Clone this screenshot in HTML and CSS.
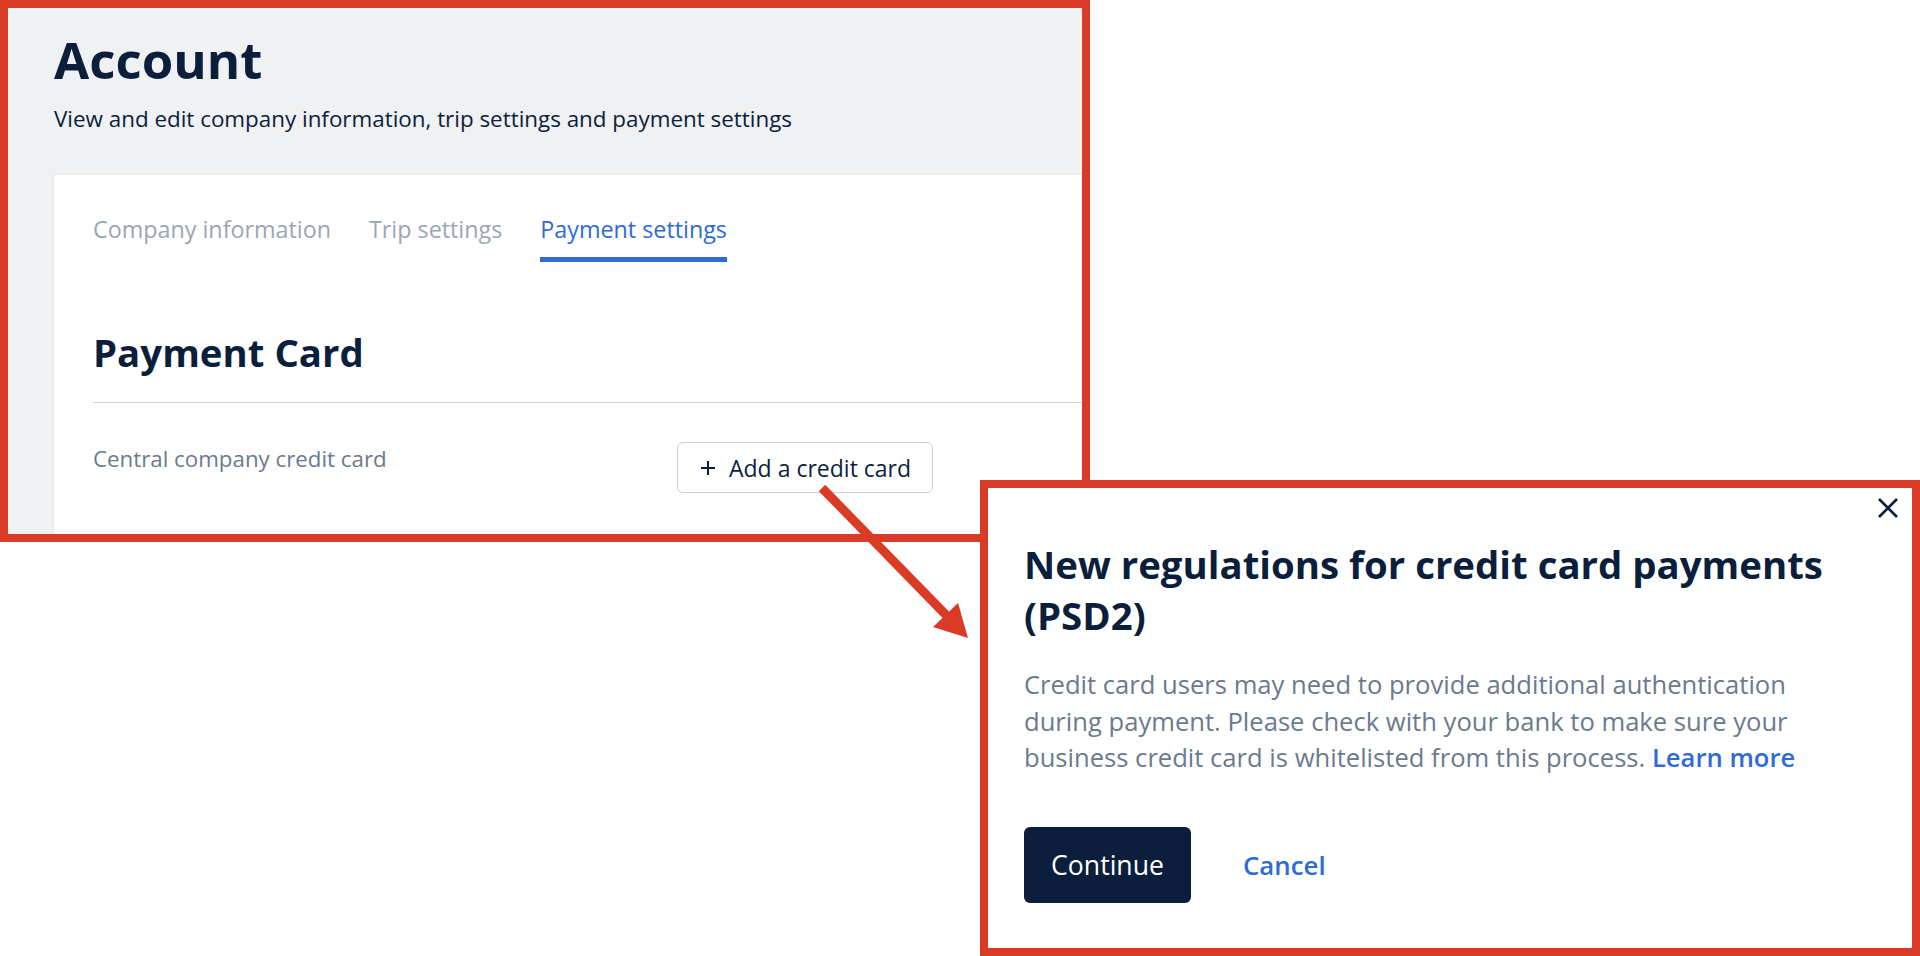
FILE: index.html
```html
<!DOCTYPE html>
<html lang="en">
<head>
<meta charset="utf-8">
<title>Account - Payment settings</title>
<link rel="stylesheet" href="styles.css">
</head>
<body>
<div class="canvas">
  <section class="shot shot-page">
    <div class="page">
      <h1 class="page-title">Account</h1>
      <p class="page-subtitle">View and edit company information, trip settings and payment settings</p>
      <div class="card">
        <nav class="tabs">
          <span class="tab">Company information</span>
          <span class="tab">Trip settings</span>
          <span class="tab tab-active">Payment settings</span>
        </nav>
        <h2 class="section-title">Payment Card</h2>
        <div class="divider"></div>
        <div class="row">
          <span class="row-label">Central company credit card</span>
          <button class="btn-outline" type="button">
            <svg class="plus" viewBox="0 0 16 16" width="16" height="16"><path d="M8 1v14M1 8h14" stroke="#0b1f3d" stroke-width="2" fill="none"/></svg>
            <span>Add a credit card</span>
          </button>
        </div>
      </div>
    </div>
  </section>

  <svg class="arrow" width="1920" height="956" viewBox="0 0 1920 956">
    <line x1="822" y1="488" x2="948" y2="617" stroke="#d93b27" stroke-width="9"/>
    <polygon points="968,638 933,627 958,603" fill="#d93b27"/>
  </svg>

  <section class="shot shot-modal">
    <div class="modal">
      <button class="close" type="button" aria-label="Close">
        <svg viewBox="0 0 22 22" width="22" height="22"><path d="M2 2l18 18M20 2L2 20" stroke="#0b1f3d" stroke-width="2.6" fill="none"/></svg>
      </button>
      <h2 class="modal-title">New regulations for credit card payments (PSD2)</h2>
      <p class="modal-text">Credit card users may need to provide additional authentication during payment. Please check with your bank to make sure your business credit card is whitelisted from this process. <a class="link" href="#">Learn more</a></p>
      <div class="actions">
        <button class="btn-primary" type="button">Continue</button>
        <a class="link-btn" href="#">Cancel</a>
      </div>
    </div>
  </section>
</div>
</body>
</html>
```

FILE: styles.css
```css
* { box-sizing: border-box; }
html, body { margin: 0; padding: 0; }
body {
  background: #ffffff;
  font-family: "Open Sans", "Noto Sans", "Liberation Sans", sans-serif;
  color: #0b1f3d;
}
.canvas {
  position: relative;
  width: 1920px;
  height: 956px;
  overflow: hidden;
}
.shot {
  position: absolute;
  border: 8px solid #d93b27;
  overflow: hidden;
}
.shot-page {
  left: 0;
  top: 0;
  width: 1090px;
  height: 542px;
  z-index: 1;
}
.shot-modal {
  left: 980px;
  top: 480px;
  width: 940px;
  height: 476px;
  background: #ffffff;
  z-index: 3;
}
.arrow {
  position: absolute;
  left: 0;
  top: 0;
  z-index: 2;
}

/* page screenshot */
.page {
  background: #f0f1f3;
  height: 100%;
  padding: 19px 0 0 46px;
}
.page-title {
  margin: 0;
  font-size: 51px;
  line-height: 64px;
  font-weight: 700;
  color: #0b1f3d;
}
.page-subtitle {
  margin: 12px 0 0;
  font-size: 22.4px;
  line-height: 32px;
  font-weight: 400;
  color: #0b1f3d;
}
.card {
  margin-top: 40px;
  width: 1200px;
  height: 420px;
  background: #ffffff;
  border-radius: 4px;
  box-shadow: 0 0 3px rgba(20, 30, 50, 0.10);
  padding: 38px 0 0 39px;
}
.tabs {
  display: flex;
  gap: 38px;
}
.tab {
  font-size: 23.3px;
  line-height: 32px;
  font-weight: 500;
  color: #9ba6b5;
  padding-bottom: 12px;
  border-bottom: 5px solid transparent;
}
.tab-active {
  color: #2f6bd6;
  border-bottom-color: #2f6bd6;
}
.section-title {
  margin: 62px 0 0;
  font-size: 38.4px;
  line-height: 56px;
  font-weight: 700;
  color: #0b1f3d;
}
.divider {
  margin-top: 22px;
  height: 1px;
  background: #cdd3db;
}
.row {
  display: grid;
  grid-template-columns: 584px auto;
  align-items: start;
  padding-top: 39px;
}
.row-label {
  font-size: 22.3px;
  line-height: 33px;
  color: #6b7a8f;
}
.btn-outline {
  justify-self: start;
  display: flex;
  align-items: center;
  justify-content: flex-start;
  gap: 13px;
  width: 256px;
  height: 51px;
  padding: 0 0 0 22px;
  background: #ffffff;
  border: 1px solid #c9d0d9;
  border-radius: 6px;
  font-family: inherit;
  font-size: 23px;
  font-weight: 500;
  color: #0b1f3d;
}
.plus { flex: none; }

/* modal screenshot */
.modal {
  position: relative;
  height: 100%;
  padding: 51px 0 0 36px;
}
.close {
  position: absolute;
  top: 9px;
  right: 13px;
  width: 22px;
  height: 22px;
  padding: 0;
  border: 0;
  background: none;
  display: flex;
}
.modal-title {
  margin: 0;
  width: 840px;
  font-size: 38.4px;
  line-height: 51px;
  font-weight: 700;
  color: #0b1f3d;
}
.modal-text {
  margin: 26px 0 0;
  width: 805px;
  font-size: 25.6px;
  line-height: 36.7px;
  color: #6b7a8f;
}
.link {
  color: #2f6bd6;
  font-weight: 600;
  text-decoration: none;
}
.actions {
  display: flex;
  align-items: center;
  gap: 52px;
  margin-top: 50px;
}
.btn-primary {
  width: 167px;
  height: 76px;
  background: #0b1f3d;
  color: #ffffff;
  border: 0;
  border-radius: 6px;
  font-family: inherit;
  font-size: 26.6px;
  font-weight: 500;
}
.link-btn {
  color: #2f6bd6;
  font-size: 25.8px;
  font-weight: 600;
  text-decoration: none;
}
```
